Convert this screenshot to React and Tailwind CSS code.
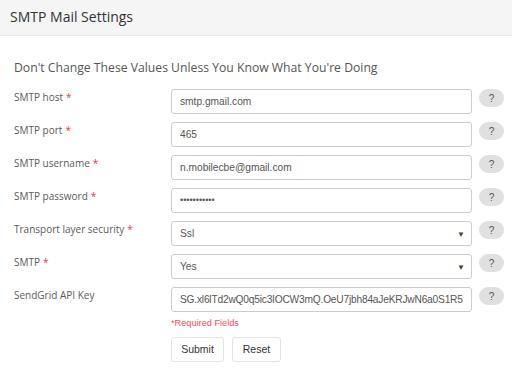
import React from "react";

const rows = [
  { label: "SMTP host", req: true, value: "smtp.gmail.com" },
  { label: "SMTP port", req: true, value: "465" },
  { label: "SMTP username", req: true, value: "n.mobilecbe@gmail.com" },
  { label: "SMTP password", req: true, value: "•••••••••••", pw: true },
  { label: "Transport layer security", req: true, value: "Ssl", select: true },
  { label: "SMTP", req: true, value: "Yes", select: true },
  { label: "SendGrid API Key", req: false, value: "SG.xl6lTd2wQ0q5ic3IOCW3mQ.OeU7jbh84aJeKRJwN6a0S1R5", api: true },
];

export default function App() {
  return (
    <div className="w-[512px] h-[368px] bg-white overflow-hidden">
      <div className="h-[36px] bg-[#f5f5f5] border-b border-[#e8e8e8] flex items-center pl-[10px]">
        <span className="text-[14px] text-[#333] font-['Open_Sans',sans-serif] leading-none -mt-[1px]">SMTP Mail Settings</span>
      </div>
      <div className="pl-[14px] pr-[8px]">
        <div className="mt-[22px] h-[19px] text-[12.2px] leading-[19px] text-[#555] font-['Open_Sans',sans-serif]">
          Don't Change These Values Unless You Know What You're Doing
        </div>
        <div className="mt-[12px] flex flex-col gap-[8px]">
          {rows.map((r, i) => (
            <div key={i} className="flex items-start">
              <div className="w-[157px] pt-[1px] text-[10px] leading-[14px] text-[#5a5a5a] font-['Open_Sans',sans-serif]">
                {r.label}
                {r.req && <span className="text-[#e53935] ml-[3px]">*</span>}
              </div>
              <div className="w-[301px] h-[25px] border border-[#ccc] rounded-[3px] flex items-center pl-[8px] pr-[6px] bg-white">
                <span
                  className={
                    "flex-1 min-w-0 whitespace-nowrap overflow-hidden font-['Liberation_Sans',Arial,sans-serif] text-[#555] " +
                    (r.pw ? "text-[9px]" : r.api ? "text-[10.2px] tracking-[-0.2px]" : "text-[10.2px]")
                  }
                >
                  {r.value}
                </span>
                {r.select && <span className="text-[8px] text-[#444] leading-none">▼</span>}
              </div>
              <div className="ml-[7px] w-[25px] h-[18px] rounded-full bg-[#e0e0e0] flex items-center justify-center text-[10px] text-[#555] font-['Liberation_Sans',Arial,sans-serif]">
                ?
              </div>
            </div>
          ))}
        </div>
        <div className="ml-[157px] mt-[4px] text-[9.2px] leading-[14px] text-[#ff4d5a] font-['Liberation_Sans',Arial,sans-serif]">
          *Required Fields
        </div>
        <div className="ml-[157px] mt-[7px] flex gap-[8px]">
          <div className="w-[53px] h-[25px] border border-[#e3e3e3] rounded-[3px] flex items-center justify-center text-[10.5px] text-[#333] font-['Liberation_Sans',Arial,sans-serif]">
            Submit
          </div>
          <div className="w-[49px] h-[25px] border border-[#e3e3e3] rounded-[3px] flex items-center justify-center text-[10.5px] text-[#333] font-['Liberation_Sans',Arial,sans-serif]">
            Reset
          </div>
        </div>
      </div>
    </div>
  );
}
